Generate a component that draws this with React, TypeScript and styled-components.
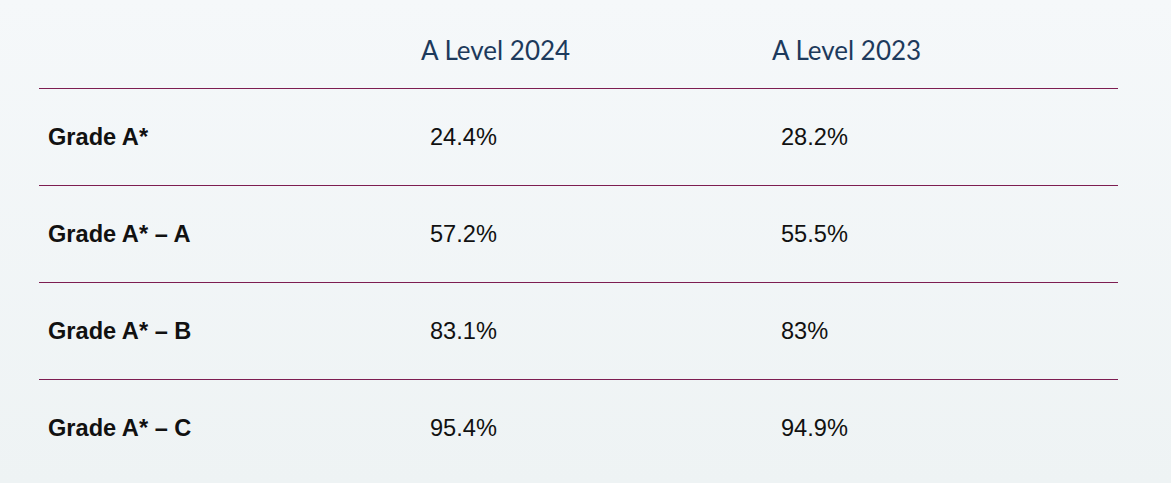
import styled, { createGlobalStyle } from 'styled-components';

const GlobalStyle = createGlobalStyle`
  html, body {
    margin: 0;
    padding: 0;
  }
  body {
    background: linear-gradient(180deg, #f5f8fa 0%, #eef3f4 100%);
    min-height: 483px;
    font-family: 'Liberation Sans', Arial, sans-serif;
  }
`;

const Page = styled.div`
  width: 1171px;
  height: 483px;
  padding: 0 53px 0 39px;
  box-sizing: border-box;
  background: linear-gradient(180deg, #f5f8fa 0%, #eef3f4 100%);
`;

const Table = styled.div`
  display: grid;
  grid-template-columns: 382px 351px 1fr;
`;

const HeadCell = styled.div`
  height: 89px;
  box-sizing: border-box;
  padding-top: 34px;
  font-family: Lato, 'Open Sans', sans-serif;
  font-size: 26px;
  font-weight: 400;
  line-height: 32px;
  color: #1d3a5c;
  border-bottom: 1px solid #7d1d51;
`;

const Cell = styled.div<{ $bold?: boolean; $last?: boolean }>`
  height: 97px;
  box-sizing: border-box;
  display: flex;
  align-items: center;
  padding: 0 9px;
  font-size: 23.6px;
  font-weight: ${(p) => (p.$bold ? 700 : 400)};
  color: #111;
  border-bottom: ${(p) => (p.$last ? 'none' : '1px solid #7d1d51')};
`;

const rows = [
  { label: 'Grade A*', y2024: '24.4%', y2023: '28.2%' },
  { label: 'Grade A* – A', y2024: '57.2%', y2023: '55.5%' },
  { label: 'Grade A* – B', y2024: '83.1%', y2023: '83%' },
  { label: 'Grade A* – C', y2024: '95.4%', y2023: '94.9%' }
];

const App = () => {
  return (
    <>
      <GlobalStyle />
      <Page>
        <Table>
          <HeadCell />
          <HeadCell>A Level 2024</HeadCell>
          <HeadCell>A Level 2023</HeadCell>
          {rows.map((r, i) => {
            const last = i === rows.length - 1;
            return [
              <Cell key={r.label + 'l'} $bold $last={last}>{r.label}</Cell>,
              <Cell key={r.label + 'a'} $last={last}>{r.y2024}</Cell>,
              <Cell key={r.label + 'b'} $last={last}>{r.y2023}</Cell>
            ];
          })}
        </Table>
      </Page>
    </>
  );
};

export default App;
